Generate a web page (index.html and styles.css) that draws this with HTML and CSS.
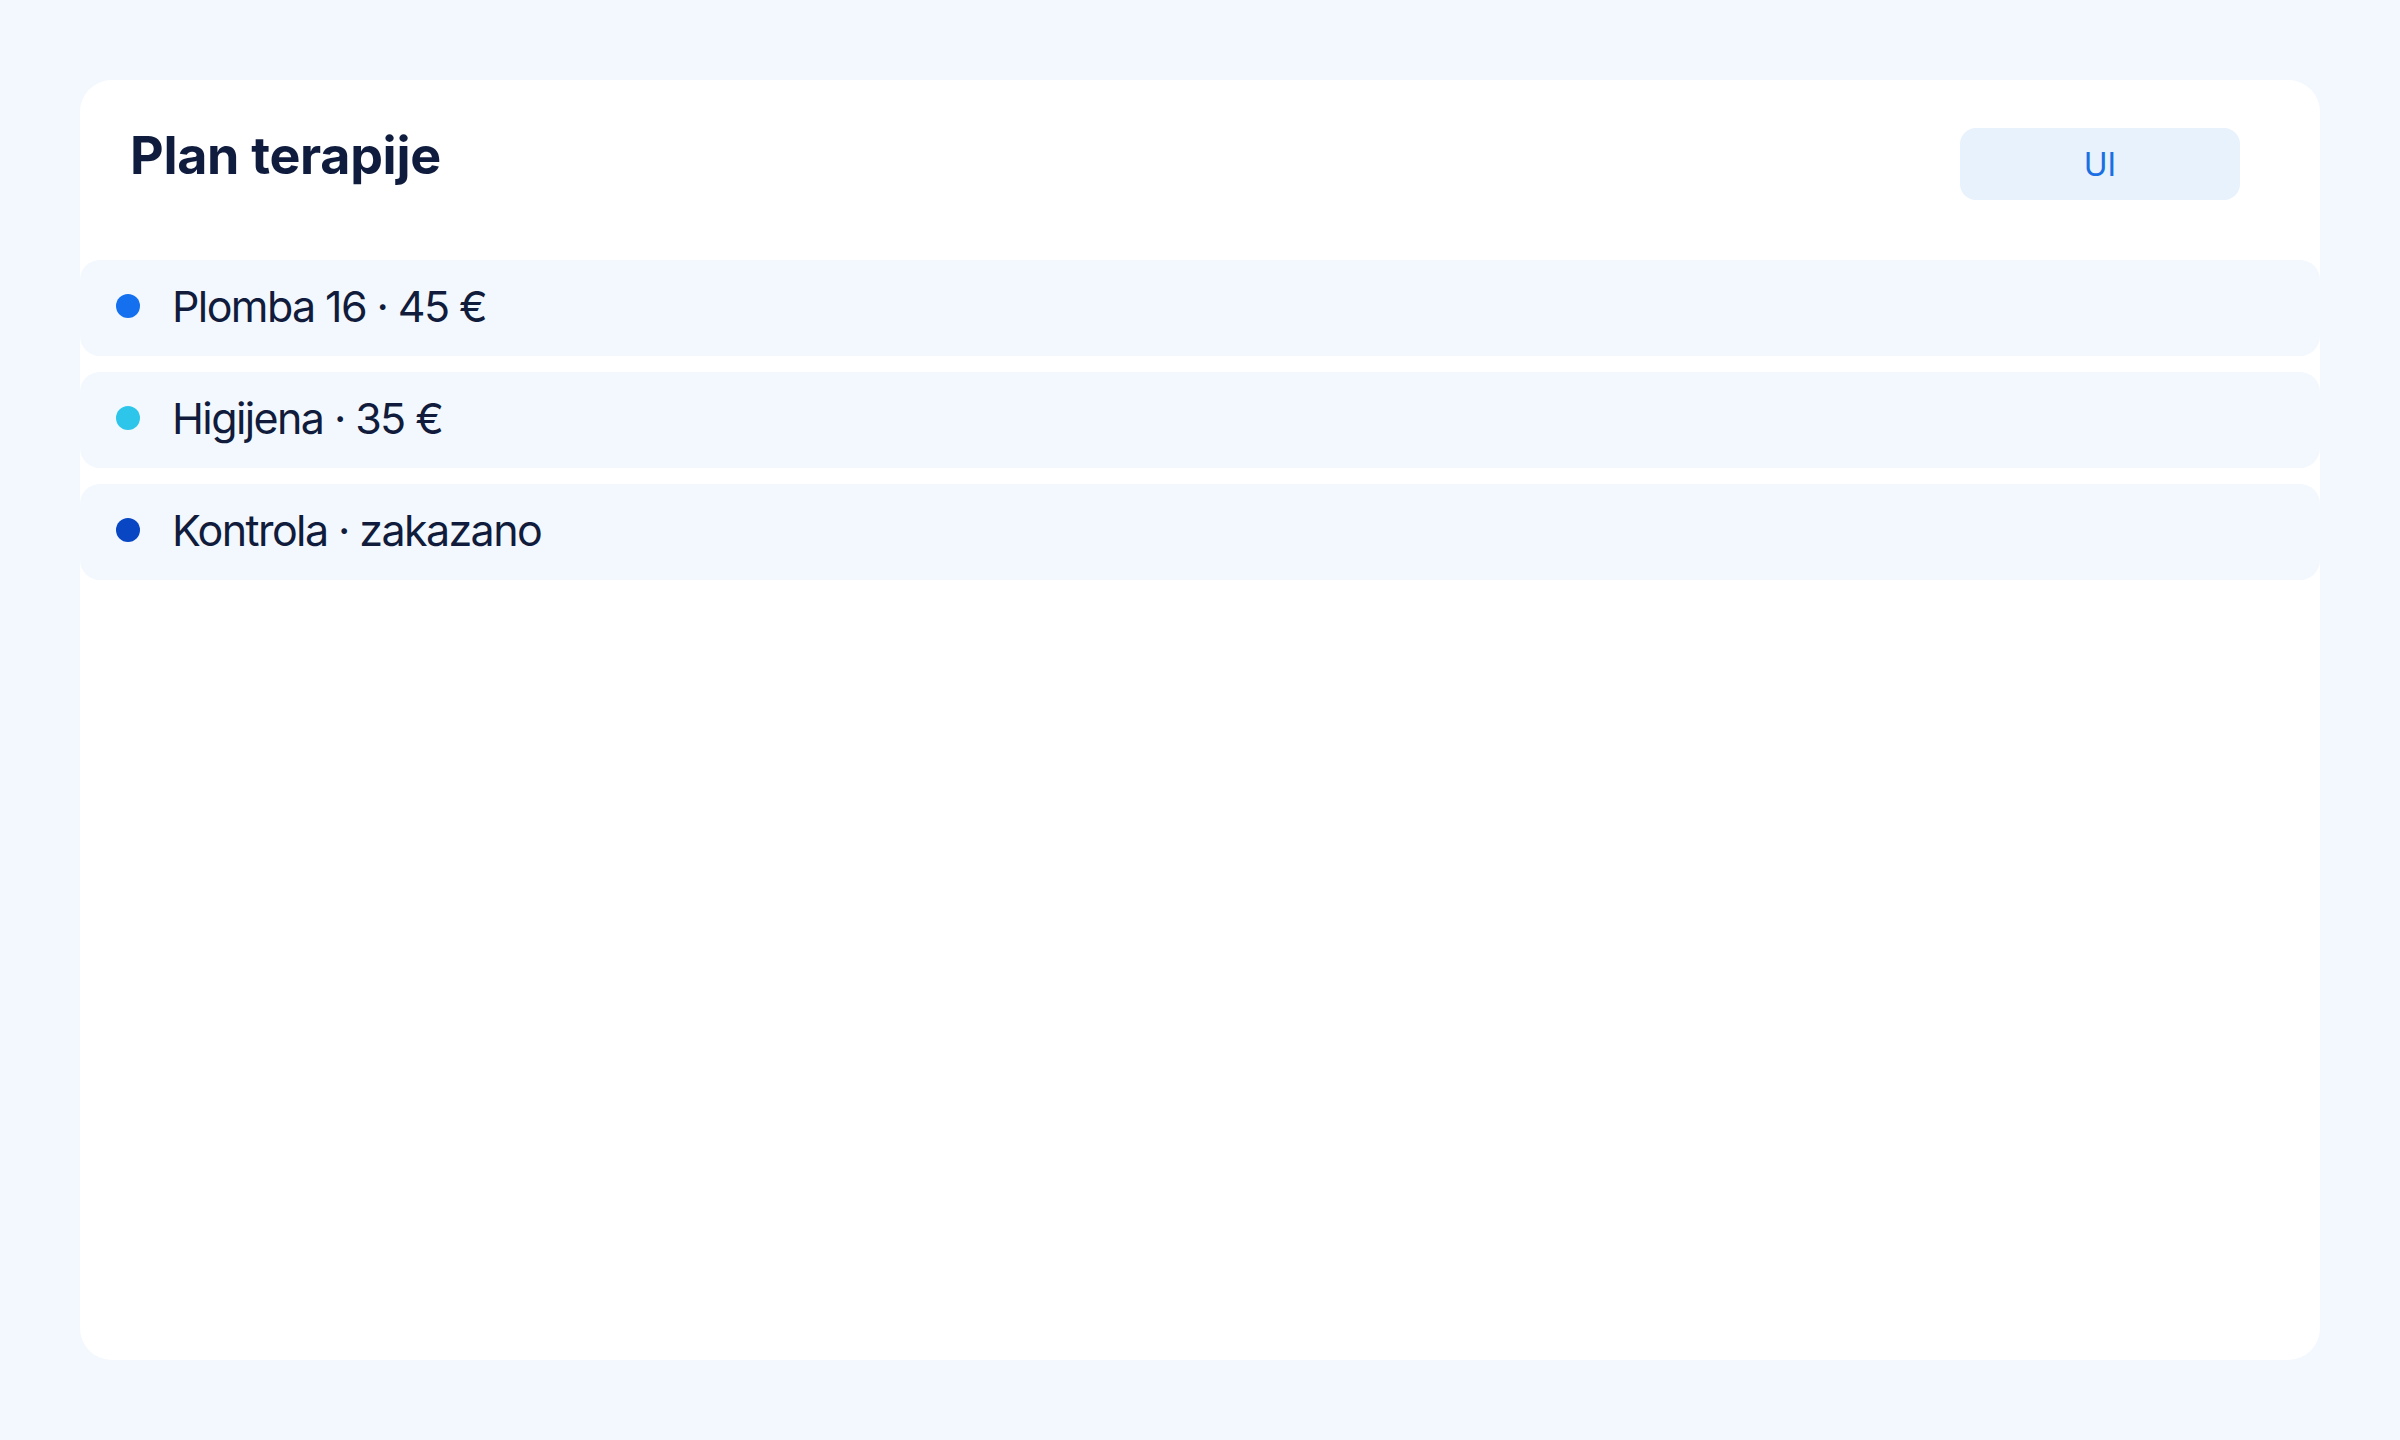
FILE: index.html
```html
<!DOCTYPE html>
<html lang="hr">
<head>
    <meta charset="UTF-8">
    <meta name="viewport" content="width=device-width, initial-scale=1.0">
    <title>Plan terapije</title>
    <link rel="stylesheet" href="styles.css">
</head>
<body>
    <div class="plan-card">
        <div class="plan-header">
            <h1>Plan terapije</h1>
            <button type="button" class="tag-button">UI</button>
        </div>
        <ul class="plan-list">
            <li class="plan-item"><span class="dot dot-blue"></span>Plomba 16 · 45 €</li>
            <li class="plan-item"><span class="dot dot-cyan"></span>Higijena · 35 €</li>
            <li class="plan-item"><span class="dot dot-navy"></span>Kontrola · zakazano</li>
        </ul>
    </div>
</body>
</html>
```

FILE: styles.css
```css
/* General Styles */
body {
    font-family: Inter, "Noto Sans", sans-serif;
    background-color: #f3f8fe;
    margin: 0;
    padding: 80px;
    height: 100vh;
    box-sizing: border-box;
}

/* Card */
.plan-card {
    background-color: #ffffff;
    border-radius: 32px;
    height: 100%;
    box-sizing: border-box;
}

/* Header */
.plan-header {
    display: flex;
    justify-content: space-between;
    align-items: flex-start;
    padding: 48px 80px 0 50px;
}

h1 {
    margin: 0;
    font-size: 52px;
    line-height: 56px;
    font-weight: 700;
    letter-spacing: -0.3px;
    color: #0f1c3d;
}

.tag-button {
    width: 280px;
    height: 72px;
    border: none;
    border-radius: 16px;
    background-color: #e8f2fd;
    color: #1a6fe3;
    font-family: Inter, sans-serif;
    font-size: 32px;
    cursor: pointer;
}

/* List */
.plan-list {
    list-style: none;
    margin: 60px 0 0;
    padding: 0;
    display: flex;
    flex-direction: column;
    gap: 16px;
}

.plan-item {
    display: flex;
    align-items: center;
    gap: 32px;
    height: 96px;
    padding: 0 0 4px 36px;
    box-sizing: border-box;
    border-radius: 20px;
    background-color: #f3f8fe;
    font-size: 43px;
    letter-spacing: -1.6px;
    color: #111c3c;
}

.dot {
    width: 24px;
    height: 24px;
    border-radius: 50%;
    flex-shrink: 0;
}

.dot-blue { background-color: #1570ef; }
.dot-cyan { background-color: #2dc6ea; }
.dot-navy { background-color: #0846c4; }
```
